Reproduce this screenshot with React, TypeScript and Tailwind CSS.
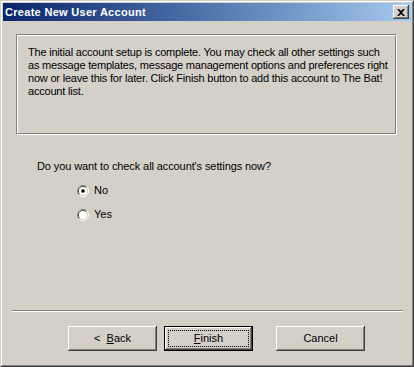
import React from "react";

const bevel =
  "shadow-[inset_-1px_-1px_#404040,inset_1px_1px_#ffffff,inset_-2px_-2px_#808080,inset_2px_2px_#d4d0c8]";

function Radio({ checked }: { checked: boolean }) {
  return (
    <svg width="12" height="12" viewBox="0 0 12 12" className="shrink-0">
      <path d="M2.11 9.89 A5.5 5.5 0 0 1 9.89 2.11" fill="none" stroke="#808080" strokeWidth="1" />
      <path d="M9.89 2.11 A5.5 5.5 0 0 1 2.11 9.89" fill="none" stroke="#ffffff" strokeWidth="1" />
      <path d="M2.82 9.18 A4.5 4.5 0 0 1 9.18 2.82" fill="none" stroke="#404040" strokeWidth="1" />
      <path d="M9.18 2.82 A4.5 4.5 0 0 1 2.82 9.18" fill="none" stroke="#d4d0c8" strokeWidth="1" />
      <circle cx="6" cy="6" r="4" fill="#ffffff" />
      {checked && <circle cx="6" cy="6" r="1.8" fill="#000000" />}
    </svg>
  );
}

function Button({
  children,
  isDefault,
}: {
  children: React.ReactNode;
  isDefault?: boolean;
}) {
  if (isDefault) {
    return (
      <div className="w-[89px] h-[25px] border border-black bg-[#d4d0c8]">
        <div className={`w-full h-full flex items-center justify-center p-[3px] ${bevel}`}>
          <div className="w-full h-full border border-dotted border-black flex items-center justify-center">
            {children}
          </div>
        </div>
      </div>
    );
  }
  return (
    <div className={`w-[89px] h-[25px] bg-[#d4d0c8] flex items-center justify-center ${bevel}`}>
      {children}
    </div>
  );
}

export default function App() {
  return (
    <div
      className="w-[414px] h-[367px] bg-[#d4d0c8] text-[11px] leading-[13px] text-black"
      style={{ fontFamily: '"Liberation Sans", Arial, sans-serif' }}
    >
      <div className="w-full h-full border border-t-[#d4d0c8] border-l-[#d4d0c8] border-b-[#404040] border-r-[#404040]">
        <div className="w-full h-full border border-t-white border-l-white border-b-[#808080] border-r-[#808080] p-px flex flex-col">
          {/* title bar */}
          <div className="h-[18px] flex items-center justify-between bg-gradient-to-r from-[#0a246a] to-[#a6caf0] pl-[2px] pr-[2px]">
            <span className="text-white font-bold text-[11px] tracking-[0.3px]">Create New User Account</span>
            <div className={`w-[16px] h-[14px] bg-[#d4d0c8] flex items-center justify-center ${bevel}`}>
              <svg width="8" height="7" viewBox="0 0 8 7">
                <path d="M0 0h2l2 2 2-2h2L5 3.5 8 7H6L4 5 2 7H0l3-3.5z" fill="#000" />
              </svg>
            </div>
          </div>

          {/* info box */}
          <div className="mt-[13px] ml-[13px] w-[381px] h-[101px] border border-t-[#808080] border-l-[#808080] border-b-white border-r-white">
            <div className="w-full h-full border border-t-white border-l-white border-b-[#808080] border-r-[#808080] pl-[10px] pt-[10px]">
              <p className="whitespace-nowrap tracking-[-0.2px]">
                The initial account setup is complete. You may check all other settings such
                <br />
                as message templates, message management options and preferences right
                <br />
                now or leave this for later. Click Finish button to add this account to The Bat!
                <br />
                account list.
              </p>
            </div>
          </div>

          {/* question */}
          <p className="mt-[25px] ml-[34px] tracking-[-0.1px]">Do you want to check all account's settings now?</p>

          <div className="mt-[11px] ml-[74px] flex flex-col gap-[11px]">
            <div className="flex items-center gap-[5px] h-[13px]">
              <Radio checked />
              <span>No</span>
            </div>
            <div className="flex items-center gap-[5px] h-[13px]">
              <Radio checked={false} />
              <span>Yes</span>
            </div>
          </div>

          <div className="flex-1" />

          {/* separator */}
          <div className="ml-[9px] w-[391px] h-[2px] border-t border-t-[#808080] border-b border-b-white" />

          <div className="mt-[14px] mb-[13px] ml-[65px] flex items-center">
            <Button>
              <span>&lt;&nbsp;&nbsp;<span className="underline">B</span>ack</span>
            </Button>
            <div className="ml-[7px]">
              <Button isDefault>
                <span>
                  <span className="underline">F</span>inish
                </span>
              </Button>
            </div>
            <div className="ml-[23px]">
              <Button>
                <span>Cancel</span>
              </Button>
            </div>
          </div>
        </div>
      </div>
    </div>
  );
}
